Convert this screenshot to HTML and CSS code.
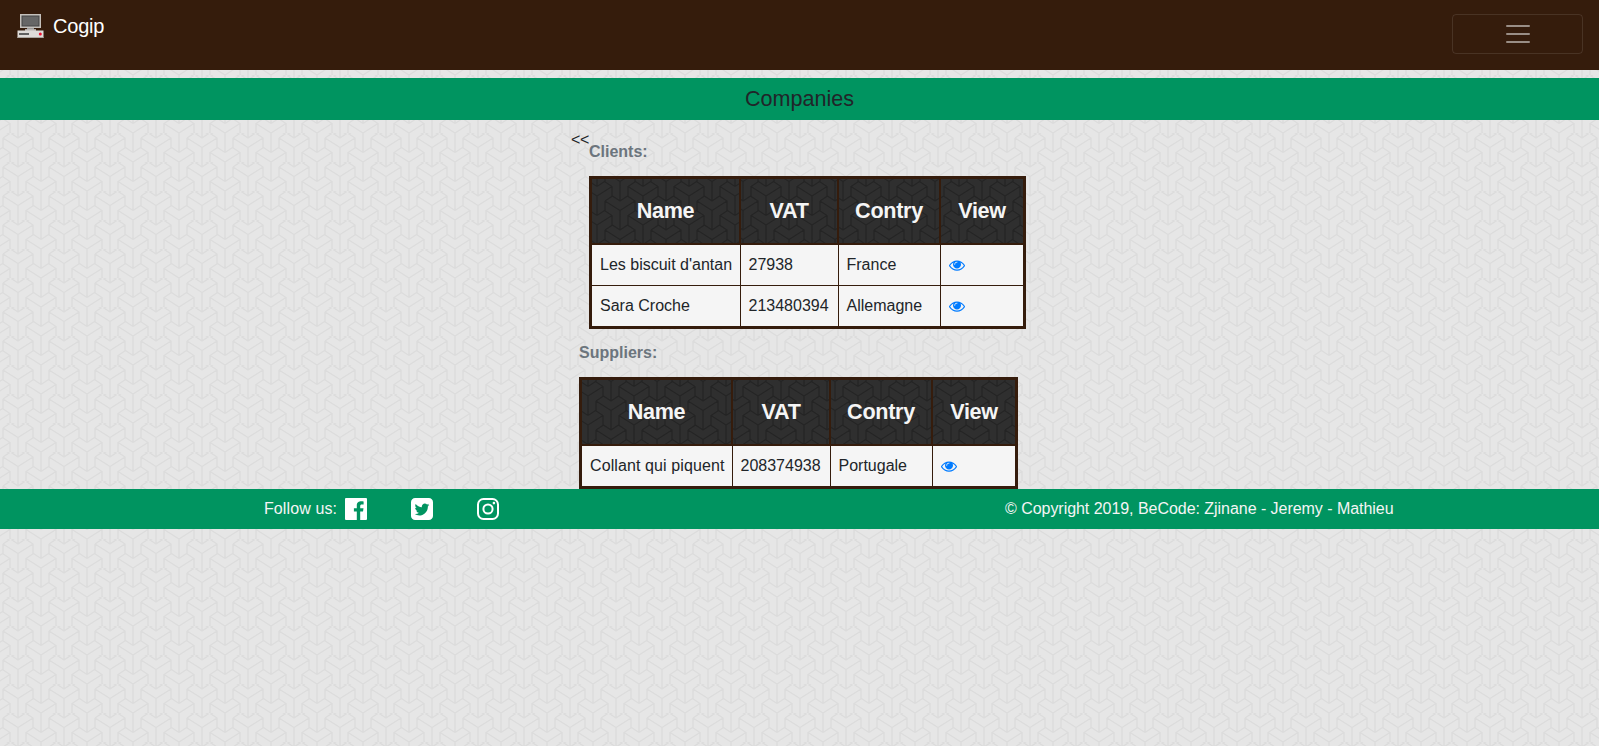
FILE: index.html
```html
<!DOCTYPE html>
<html lang="en">
<head>
<meta charset="utf-8">
<title>Cogip - Companies</title>
<link rel="stylesheet" href="styles.css">
</head>
<body>
<svg class="defs" aria-hidden="true">
  <symbol id="eye" viewBox="0 0 1792 1792"><path d="M1664 960q-152-236-381-353 61 104 61 225 0 185-131.500 316.500t-316.500 131.500-316.500-131.500-131.500-316.500q0-121 61-225-229 117-381 353 133 205 333.500 326.500t434.500 121.500 434.500-121.500 333.500-326.500zm-720-384q0-20-14-34t-34-14q-125 0-214.500 89.500t-89.500 214.500q0 20 14 34t34 14 34-14 14-34q0-86 61-147t147-61q20 0 34-14t14-34zm848 384q0 34-20 69-140 230-376.500 368.500t-499.500 138.500-499.500-139-376.500-368q-20-35-20-69t20-69q140-229 376.500-368t499.500-139 499.500 139 376.500 368q20 35 20 69z"/></symbol>
</svg>
<nav class="navbar">
  <a class="brand">
    <svg class="logo" width="30" height="30" viewBox="0 0 30 30">
      <path fill="#c4c0bb" d="M5 2h21v14H5z"/><path fill="#454545" d="M6.500 3.500h18v11h-18z"/><path fill="#666" d="M7.500 4.500h16v9h-16z"/>
      <path fill="#999" d="M12 16h7v1.500h-7z"/><path fill="#ddd" d="M10 17.300h11v1.500H10z"/>
      <path fill="#dedbd8" d="M2.500 18.500h26V26h-26z"/><path fill="#aaa59f" d="M2.500 25h26v1h-26z"/><path fill="#606060" d="M4 21h10v2H4z"/><circle cx="25.300" cy="22" r="1.500" fill="#f01030"/>
    </svg><span>Cogip</span>
  </a>
  <button class="toggler"><svg width="30" height="30" viewBox="0 0 30 30"><path stroke="rgba(255,255,255,.5)" stroke-width="2" stroke-linecap="round" d="M4 7h22M4 15h22M4 23h22"/></svg></button>
</nav>
<h1 class="title">Companies</h1>
<main class="content">
  <div class="group">
    <a class="back">&lt;&lt;</a>
    <section>
      <p class="caption">Clients:</p>
      <table class="list clients">
        <colgroup><col class="name"><col class="vat"><col class="country"><col></colgroup>
        <thead><tr><th>Name</th><th>VAT</th><th>Contry</th><th>View</th></tr></thead>
        <tbody>
          <tr><td>Les biscuit d'antan</td><td>27938</td><td>France</td><td><svg class="eye"><use href="#eye"/></svg></td></tr>
          <tr><td>Sara Croche</td><td>213480394</td><td>Allemagne</td><td><svg class="eye"><use href="#eye"/></svg></td></tr>
        </tbody>
      </table>
    </section>
  </div>
  <div class="group">
    <section>
      <p class="caption">Suppliers:</p>
      <table class="list suppliers">
        <colgroup><col class="name"><col class="vat"><col class="country"><col></colgroup>
        <thead><tr><th>Name</th><th>VAT</th><th>Contry</th><th>View</th></tr></thead>
        <tbody>
          <tr><td>Collant qui piquent</td><td>208374938</td><td>Portugale</td><td><svg class="eye"><use href="#eye"/></svg></td></tr>
        </tbody>
      </table>
    </section>
  </div>
</main>
<footer class="footer">
  <div class="social">
    <span>Follow us:</span>
    <svg viewBox="0 0 22 22"><path fill="#fff" fill-rule="evenodd" d="M1 0h20q1 0 1 1v20q0 1-1 1h-5.800v-8.500H18l.5-3.300h-3.300V8.100c0-1 .4-1.600 1.700-1.600h1.700V3.500c-3.800-.6-6.800.1-6.800 4.100v2.600H8.900v3.300h2.900V22H1q-1 0-1-1V1q0-1 1-1z"/></svg>
    <svg viewBox="0 0 1536 1536"><path fill="#fff" d="M1280 482q-56 25-121 34 68-40 93-117-65 38-134 51-61-66-153-66-87 0-148.500 61.500t-61.500 148.500q0 29 5 48-129-7-242-65t-192-155q-29 50-29 106 0 114 91 175-47-1-100-26v2q0 75 50 133.500t123 72.500q-29 8-51 8-13 0-39-4 21 63 74.500 104t121.500 42q-116 90-261 90-26 0-50-3 148 94 322 94 112 0 210-35.500t168-95 120.500-137 75-162 24.500-168.500q0-18-1-27 63-45 105-109zm256-194v960q0 119-84.500 203.500t-203.500 84.500h-960q-119 0-203.500-84.500t-84.500-203.500v-960q0-119 84.500-203.500t203.500-84.500h960q119 0 203.500 84.500t84.500 203.500z"/></svg>
    <svg viewBox="0 0 22 22"><g fill="none" stroke="#fff" stroke-width="2"><rect x="1" y="1" width="20" height="20" rx="5.500"/><circle cx="11" cy="11" r="4.600"/></g><circle cx="16.900" cy="5.100" r="1.300" fill="#fff"/></svg>
  </div>
  <div class="copy">© Copyright 2019, BeCode: Zjinane - Jeremy - Mathieu</div>
</footer>
</body>
</html>
```
FILE: styles.css
```css
* { box-sizing: border-box; }
html { overflow-x: hidden; }
body {
  margin: 0;
  font: 16px/24px "Liberation Sans", Arial, sans-serif;
  color: #212529;
  background: #e6e6e6 url("data:image/svg+xml,%3Csvg xmlns='http://www.w3.org/2000/svg' width='46' height='29' viewBox='0 0 46 29'%3E%3Cpath fill='none' stroke='%23dcdcdc' stroke-width='1.4' d='M8 4L23 13.500L38 4M8 33L23 42.500L38 33M23 13.500V33M23 -15.500V4M8 4L15.500 -1L23 4L30.500 -1L38 4V13.500M8 33L15.500 28L23 33L30.500 28L38 33M8 4V13.500M-15 18.500L0 28L15 18.500M31 18.500L46 28L61 18.500M-15 -10.500L0 -1L15 -10.500M31 -10.500L46 -1L61 -10.500M0 -1V18.500M46 -1V18.500M0 28V33M46 28V33M0 18.500L7.500 13.500L15 18.500V28M31 28V18.500L38.500 13.500L46 18.500'/%3E%3C/svg%3E") -5.5px -11.5px;
}
.defs { display: block; width: 0; height: 0; }
.navbar {
  height: 70px;
  padding: 8px 16px;
  display: flex;
  justify-content: space-between;
  align-items: flex-start;
  background: #351c0c;
}
.brand { display: flex; padding-top: 3px; color: #fff; font-size: 20px; line-height: 30px; gap: 8px; letter-spacing: -.2px; }
.logo { margin: 1px 0 0 -1px; }
.toggler {
  width: 131px; height: 40px; margin-top: 6px; padding: 0;
  display: flex; align-items: center; justify-content: center;
  background: none; border: 1px solid rgba(255,255,255,.1); border-radius: 4px;
}
.title { margin: 8px 0 0; height: 42px; line-height: 42px; text-align: center; font-size: 21.6px; font-weight: 400; background: #009460; }
.content { padding: 8px 2px 0 0; }
.group { display: flex; justify-content: center; }
.back { width: 18px; letter-spacing: -.35px; }
section { padding-top: 12px; }
.caption { margin: 0 0 12px; font-weight: 700; color: #6c757d; }
.list { border-collapse: collapse; border: 3px solid #351c0c; background: #f5f5f5; table-layout: fixed; white-space: nowrap; }
.clients { width: 437px; }
.suppliers { width: 439px; }
.clients .name { width: 149.5px; }
.suppliers .name { width: 151.5px; }
.vat { width: 98px; }
.country { width: 102px; }
.list th {
  height: 66px; padding: 0; font-size: 21.6px; letter-spacing: -.3px; color: #f5f5f5; border: 2px solid #351c0c;
  background: #2f2f2f url("data:image/svg+xml,%3Csvg xmlns='http://www.w3.org/2000/svg' width='46' height='29' viewBox='0 0 46 29'%3E%3Cpath fill='none' stroke='%23242424' stroke-width='1.4' d='M8 4L23 13.500L38 4M8 33L23 42.500L38 33M23 13.500V33M23 -15.500V4M8 4L15.500 -1L23 4L30.500 -1L38 4V13.500M8 33L15.500 28L23 33L30.500 28L38 33M8 4V13.500M-15 18.500L0 28L15 18.500M31 18.500L46 28L61 18.500M-15 -10.500L0 -1L15 -10.500M31 -10.500L46 -1L61 -10.500M0 -1V18.500M46 -1V18.500M0 28V33M46 28V33M0 18.500L7.500 13.500L15 18.500V28M31 28V18.500L38.500 13.500L46 18.500'/%3E%3C/svg%3E") center;
}
.list.suppliers th { height: 67px; }
.list td { height: 41px; padding: 8px; border: 1px solid #351c0c; }
.suppliers td:first-child { letter-spacing: .1px; }
.eye { display: block; width: 16px; height: 16px; fill: #007bff; }
.footer { height: 40px; display: flex; background: #009460; color: #f5f5f5; }
.social { display: flex; width: 1005px; padding: 9px 0 0 264px; }
.social span { line-height: 22px; width: 81px; letter-spacing: .1px; white-space: nowrap; }
.social svg { width: 22px; height: 22px; margin-right: 44px; }
.copy { line-height: 40px; letter-spacing: -.04px; }
```
